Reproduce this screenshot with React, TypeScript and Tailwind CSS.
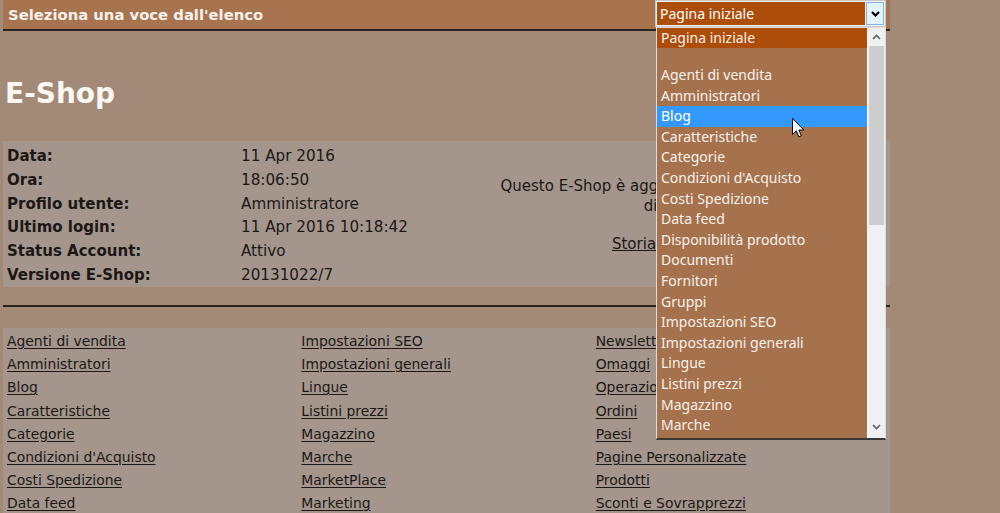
import React from "react";

const infoRows: [string, string][] = [
  ["Data:", "11 Apr 2016"],
  ["Ora:", "18:06:50"],
  ["Profilo utente:", "Amministratore"],
  ["Ultimo login:", "11 Apr 2016 10:18:42"],
  ["Status Account:", "Attivo"],
  ["Versione E-Shop:", "20131022/7"],
];

const cols: string[][] = [
  ["Agenti di vendita", "Amministratori", "Blog", "Caratteristiche", "Categorie", "Condizioni d'Acquisto", "Costi Spedizione", "Data feed"],
  ["Impostazioni SEO", "Impostazioni generali", "Lingue", "Listini prezzi", "Magazzino", "Marche", "MarketPlace", "Marketing"],
  ["Newsletter", "Omaggi", "Operazioni", "Ordini", "Paesi", "Pagine Personalizzate", "Prodotti", "Sconti e Sovrapprezzi"],
];

const listItems = [
  "Agenti di vendita", "Amministratori", "Blog", "Caratteristiche", "Categorie", "Condizioni d'Acquisto",
  "Costi Spedizione", "Data feed", "Disponibilità prodotto", "Documenti", "Fornitori", "Gruppi",
  "Impostazioni SEO", "Impostazioni generali", "Lingue", "Listini prezzi", "Magazzino", "Marche", "MarketPlace",
];

function ChevronDown({ color, w = 2 }: { color: string; w?: number }) {
  return (
    <svg width="9" height="6" viewBox="0 0 9 6">
      <path d="M1 1 L4.5 4.5 L8 1" fill="none" stroke={color} strokeWidth={w} />
    </svg>
  );
}
function ChevronUp({ color }: { color: string }) {
  return (
    <svg width="9" height="6" viewBox="0 0 9 6">
      <path d="M1 5 L4.5 1.5 L8 5" fill="none" stroke={color} strokeWidth={1.6} />
    </svg>
  );
}

export default function App() {
  return (
    <div className="relative w-[1000px] h-[513px] overflow-hidden bg-[#a38a78] font-['DejaVu_Sans',Verdana,sans-serif] text-[#1b1816]">
      <div className="ml-[3px] w-[887px] flex flex-col">
        {/* top bar */}
        <div className="h-[29px] bg-[#a8744f] flex items-start justify-between">
          <div className="pl-[5px] pt-[5px] text-[14.8px] leading-[20px] font-bold text-[#f6f1ea]">
            Seleziona una voce dall'elenco
          </div>
          <div className="mr-[4px] w-[231px] h-[27px] border border-[#c9c9c9] bg-[#f2f2f2] p-px flex">
            <div className="flex-1 bg-[#ad4d0a] text-white font-['Noto_Sans',sans-serif] text-[14px] leading-[23px] pl-[3px]">
              Pagina iniziale
            </div>
            <div className="w-[18px] ml-[1px] bg-[#e5f1fb] border border-[#7eb4ea] flex items-center justify-center">
              <ChevronDown color="#000" w={2.2} />
            </div>
          </div>
        </div>
        <div className="h-[2px] bg-[#2a231e]" />

        {/* E-Shop title */}
        <div className="pl-[2px] pt-[47px] pb-[31px] text-[28px] leading-[32px] font-bold text-[#fbf8f4]">E-Shop</div>

        {/* info box */}
        <div className="h-[146px] bg-[#a4968c] flex">
          <div className="w-[238px] pl-[4px] pt-[4px] flex flex-col">
            {infoRows.map(([l]) => (
              <div key={l} className="h-[23.8px] leading-[23.8px] text-[15px] font-bold">{l}</div>
            ))}
          </div>
          <div className="w-[242px] pt-[4px] flex flex-col">
            {infoRows.map(([l, v]) => (
              <div key={l} className="h-[23.8px] leading-[23.8px] text-[15.2px]">{v}</div>
            ))}
          </div>
          <div className="flex-1 flex flex-col justify-center items-center text-center text-[15px] leading-[19.4px] pt-[4px]">
            <div className="whitespace-nowrap">Questo E-Shop è aggiornato con l'ultima versione</div>
            <div>disponibile.</div>
            <div>&nbsp;</div>
            <a className="underline whitespace-nowrap">Storia delle versioni</a>
          </div>
        </div>

        {/* hr */}
        <div className="mt-[18px] h-[2px] bg-[#2a231e]" />

        {/* links */}
        <div className="mt-[21px] h-[200px] bg-[#a4968c] grid grid-cols-3 pl-[4px] pt-[2px]">
          {cols.map((c, i) => (
            <div key={i} className="flex flex-col">
              {c.map((t) => (
                <div key={t} className="h-[23.2px] leading-[23.2px] text-[13.9px] whitespace-nowrap">
                  <a className="underline underline-offset-2">{t}</a>
                </div>
              ))}
            </div>
          ))}
        </div>
      </div>

      {/* open dropdown list */}
      <div className="absolute left-[656px] top-[27px] w-[230px] h-[413px] border-l border-t border-r border-[#dcdcdc] border-b-2 border-b-[#3c3632] bg-[#a6714d] flex font-['Noto_Sans',sans-serif] text-[14px] text-[#f7f1ea]">
        <div className="flex-1 overflow-hidden flex flex-col">
          <div className="h-[20px] shrink-0 leading-[20px] bg-[#ad4d0a] pl-[4px]">Pagina iniziale</div>
          <div className="h-[17px] shrink-0" />
          {listItems.map((t) => (
            <div
              key={t}
              className={
                "h-[20.6px] shrink-0 leading-[20.6px] pl-[4px] whitespace-nowrap " +
                (t === "Blog" ? "bg-[#3399ff] text-white" : "")
              }
            >
              {t}
            </div>
          ))}
        </div>
        <div className="w-[18px] border-l border-white bg-[#f0f0f0] flex flex-col">
          <div className="h-[18px] flex items-center justify-center">
            <ChevronUp color="#606060" />
          </div>
          <div className="h-[179px] mx-px bg-[#cdcdcd]" />
          <div className="flex-1" />
          <div className="h-[18px] mb-[2px] flex items-center justify-center">
            <ChevronDown color="#606060" w={1.6} />
          </div>
        </div>
      </div>

      {/* mouse cursor */}
      <svg className="absolute left-[792px] top-[118px]" width="13" height="21" viewBox="0 0 13 21">
        <path d="M0.5 0.5 L0.5 16.5 L4.3 12.8 L6.8 18.8 L9.3 17.8 L6.8 12 L11.8 12 Z" fill="#fff" stroke="#000" strokeWidth="1" strokeLinejoin="miter" />
      </svg>
    </div>
  );
}
